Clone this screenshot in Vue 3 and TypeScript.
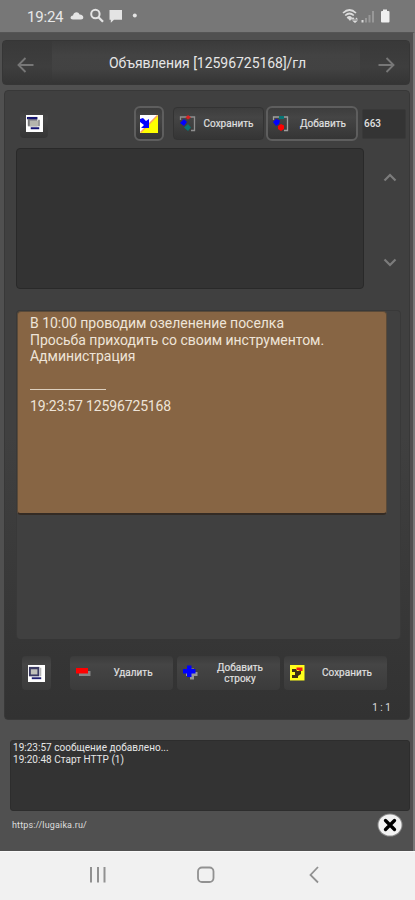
<script setup lang="ts">
import { ref } from 'vue'

const counter = ref('663')
const draft = ref('')
const message: string[] = [
  'В 10:00 проводим озеленение поселка',
  'Просьба приходить со своим инструментом.',
  'Администрация',
]
const log: string[] = ['19:23:57 сообщение добавлено...', '19:20:48 Старт HTTP (1)']
</script>

<template>
  <div class="screen">
    <header class="status">
      <span class="clock">19:24</span>
      <svg class="st-left" width="70" height="18" viewBox="0 0 70 18">
        <path d="M3 12.500C-.5 12.500 0 9 3 8.600C4 4.400 8.500 4.400 9.500 7.600C14 7.500 14.500 12.500 11 12.500Z" fill="#e4e4e4" />
        <circle cx="25.400" cy="7" r="4.200" fill="none" stroke="#e4e4e4" stroke-width="2" />
        <path d="M28.500 10.200L33 14.800" stroke="#e4e4e4" stroke-width="2.200" />
        <path d="M39.500 3H52V12.800H44L40.800 15.800V12.800H39.500Z" fill="#e4e4e4" />
        <circle cx="64.800" cy="8.600" r="2" fill="#e4e4e4" />
      </svg>
      <svg class="st-right" width="50" height="18" viewBox="0 0 50 18">
        <g fill="none" stroke="#dcdcdc" stroke-width="1.700">
          <path d="M1 6Q7.500 0 14 6M3.200 8.500Q7.500 4.500 11.800 8.500M5.200 11Q7.500 9 9.500 11" />
        </g>
        <path d="M5.500 11L8 14L10 11ZM9 12.500L11 10L13 12.500ZM10 13.500H16L13 16ZM13 12.500L14.500 10.500L16 12.500Z" fill="#dcdcdc" />
        <path d="M20.500 15.500V13" stroke="#d8d8d8" stroke-width="2" />
        <path d="M24 15.500V11M27.500 15.500V8M31 15.500V4" stroke="#989898" stroke-width="2" />
        <path d="M41 2.500H45V4H46.500Q47.500 4 47.500 5V14.500Q47.500 15.500 46.500 15.500H40Q39 15.500 39 14.500V5Q39 4 40 4H41Z" fill="#f0f0f0" />
      </svg>
    </header>

    <main class="app">
      <nav class="titlebar">
        <button class="side" aria-label="Назад">
          <svg width="18" height="18" viewBox="0 0 18 18"><path d="M16.500 9H1.500M8.500 2L1.500 9L8.500 16" /></svg>
        </button>
        <h1>Объявления [12596725168]/гл</h1>
        <button class="side right" aria-label="Вперед">
          <svg width="18" height="18" viewBox="0 0 18 18"><path d="M1.500 9H16.500M9.500 2L16.500 9L9.500 16" /></svg>
        </button>
      </nav>

      <section class="panel">
        <div class="toolbar">
          <button class="btn small" aria-label="Окно">
            <svg width="17" height="17" viewBox="0 0 18 18">
              <path d="M0 0H18V18H0Z" fill="#fff" />
              <path d="M2 2H12V12H2Z" fill="#85858a" />
              <path d="M4 6H13V12H4Z" fill="#b5b5ad" />
              <path d="M1 2H12V4.500H1ZM5 13H14V15H5Z" fill="#141470" />
              <path d="M2 4H3.500V11H2ZM13 5H14.500V12H13Z" fill="#777" />
            </svg>
          </button>
          <button class="btn outlined expand" aria-label="Перенести">
            <svg width="18" height="18" viewBox="0 0 18 18">
              <path d="M0 0H18V18H0Z" fill="#fff" />
              <path d="M18 0V18H0Z" fill="#ff0" />
              <path d="M17.500 .5L.5 17.500" stroke="#ffa35e" stroke-width="1.500" />
              <path d="M0 4L3 3L6 6L9 4V13H1L4 10L0 7Z" fill="#00f" />
            </svg>
          </button>
          <button class="btn save-top">
            <svg class="ico" width="18" height="18" viewBox="0 0 18 18">
              <path d="M1.500 5V2H15.500V15.500H12" fill="none" stroke="#8e8e8e" stroke-width="1.300" />
              <path d="M1 8L5 4L8 7L5 11Z" fill="#00f" />
              <path d="M6.500 2.500L9 0L12 2.500L9 4.500Z" fill="#d82020" />
              <path d="M5 12.500L9 9L12 12.500L9 16Z" fill="#087474" />
            </svg>
            <span>Сохранить</span>
          </button>
          <button class="btn outlined add-top">
            <svg class="ico" width="18" height="18" viewBox="0 0 18 18">
              <path d="M1.500 5V2H15.500V15.500H12" fill="none" stroke="#9e9e9e" stroke-width="1.300" />
              <path d="M1 7L4 4L8 5.500L7 9L4 11Z" fill="#00f" />
              <path d="M7 1H12V4H7Z" fill="#087474" />
              <path d="M6 11L9 9L12 10.500V14L9 16L6 14Z" fill="#f00" />
            </svg>
            <span>Добавить</span>
          </button>
          <input v-model="counter" class="count" aria-label="Номер" />
        </div>

        <div class="compose">
          <textarea v-model="draft" aria-label="Сообщение"></textarea>
          <div class="arrows">
            <svg width="14" height="9" viewBox="0 0 14 9"><path d="M1.500 7.500L7 2L12.500 7.500" /></svg>
            <svg width="14" height="9" viewBox="0 0 14 9"><path d="M1.500 1.500L7 7L12.500 1.500" /></svg>
          </div>
        </div>

        <div class="list">
          <article class="card">
            <p v-for="line in message" :key="line">{{ line }}</p>
            <hr />
            <p class="stamp">19:23:57 12596725168</p>
          </article>
        </div>

        <div class="actions">
          <button class="btn square" aria-label="Окно">
            <svg width="17" height="17" viewBox="0 0 18 18">
              <path d="M0 0H18V18H0Z" fill="#fff" />
              <path d="M1 2H12V12H1Z" fill="#3b3b62" />
              <path d="M3 4.500H10V10H3Z" fill="#c1c1ba" />
              <path d="M4 13H14V15H4Z" fill="#202070" />
              <path d="M13 3H14V12H13Z" fill="#999" />
            </svg>
          </button>
          <button class="btn wide">
            <svg class="ico" width="18" height="18" viewBox="0 0 18 18">
              <path d="M4 7H15.500V12H4Z" fill="#858585" /><path d="M1 4H13V9.500H1Z" fill="#f00" />
            </svg>
            <span>Удалить</span>
          </button>
          <button class="btn wide">
            <svg class="ico" width="18" height="18" viewBox="0 0 18 18">
              <path d="M8 4.500H12V8H15.500V12H12V15.500H8V12H4V8H8Z" fill="#969696" />
              <path d="M5 1.500H9.500V5H13.500V9.500H9.500V13H5V9.500H1V5H5Z" fill="#00f" />
            </svg>
            <span>Добавить<br />строку</span>
          </button>
          <button class="btn wide">
            <svg class="ico" width="18" height="18" viewBox="0 0 18 18">
              <path d="M1 1H15.500V16.500H1Z" fill="#ffff1c" />
              <path d="M3 5H7L8 7H12V10L9 12V14H3V11H6V8H3Z" fill="#3d3215" />
              <path d="M7.500 3.500H13.500V7H11L9 6H7.500Z" fill="#ee1b13" />
            </svg>
            <span>Сохранить</span>
          </button>
        </div>
        <div class="ratio">1&thinsp;:&thinsp;1</div>
      </section>

      <section class="log">
        <div v-for="row in log" :key="row">{{ row }}</div>
      </section>

      <footer class="foot">
        <span>https://lugaika.ru/</span>
        <button class="close" aria-label="Закрыть">
          <svg width="26" height="24" viewBox="0 0 26 24">
            <ellipse cx="13" cy="12" rx="12.500" ry="11.500" fill="#8b8b8b" />
            <ellipse cx="13" cy="12" rx="11.500" ry="10.500" fill="#f3f3f3" />
            <path d="M8.500 7.500L17.500 16.500M17.500 7.500L8.500 16.500" stroke="#000" stroke-width="3.300" stroke-linecap="round" />
          </svg>
        </button>
      </footer>
    </main>

    <div class="navkeys">
      <svg width="415" height="48" viewBox="0 0 415 48" fill="none" stroke="#919191">
        <path d="M91 15V30.500M98 15V30.500M104.500 15V30.500" stroke-width="2" />
        <rect x="198" y="15.500" width="15.500" height="14.500" rx="4" stroke-width="1.800" />
        <path d="M318 15L310.500 23L318 30.500" stroke-width="1.800" />
      </svg>
    </div>
  </div>
</template>

<style>
body { margin: 0; background: #505050; }
</style>

<style scoped>
* { box-sizing: border-box; }
.screen {
  width: 415px; height: 900px; overflow: hidden; display: flex; flex-direction: column;
  font-family: Roboto, "Liberation Sans", sans-serif; color: #dedede;
}
button { font: inherit; color: inherit; padding: 0; margin: 0; border: 0; background: none; }
svg { display: block; flex: none; }
.status { height: 32px; background: #777; display: flex; align-items: center; padding: 0 19px 0 27px; }
.clock { font-size: 15px; color: #e8e8e8; width: 43px; letter-spacing: -.2px; line-height: 18px; padding-top: 2px; }
.st-right { margin-left: auto; margin-right: 4px; }
.app {
  height: 819px; background: #505050; border-right: 2px solid #777; border-top: 1px solid #555;
  display: flex; flex-direction: column; padding: 7px 3px 0 2px;
}
.titlebar {
  height: 45px; display: flex; border: 1px solid #363636; border-radius: 4px; overflow: hidden;
  background: linear-gradient(#3b3b3b, #434343 35%, #424242 65%, #343434);
}
.side { width: 49px; background: linear-gradient(#393939, #3e3e3e 60%, #353535); display: flex; align-items: center; justify-content: center; padding: 5px 3px 0 0; }
.side.right { padding: 5px 0 0 3px; }
.side svg { fill: none; stroke: #777; stroke-width: 1.900; }
h1 { flex: 1; margin: 0; padding-left: 3px; text-align: center; font-size: 14px; letter-spacing: -.04px; font-weight: 400; line-height: 44px; color: #e6e6e6; white-space: nowrap; }
.panel {
  margin: 5px 0 0 2px; height: 630px; border: 1px solid #383838; border-radius: 4px;
  background: linear-gradient(#404040, #404040 55%, #323232); padding: 15px 0 0 11px;
}
.toolbar { height: 35px; display: flex; align-items: center; }
.btn { background: linear-gradient(#3d3d3d, #454545 30%, #353535); display: flex; align-items: center; border-radius: 4px; }
.small { width: 28px; height: 28px; margin-left: 4px; justify-content: center; }
.outlined { border: 2px solid #5e5e5e; border-radius: 6px; }
.expand { width: 30px; height: 35px; margin-left: 86px; padding-right: 1px; justify-content: center; }
.save-top { width: 91px; height: 33px; margin-left: 9px; padding-left: 5px; border: 1px solid #333; }
.add-top { width: 92px; height: 35px; margin-left: 2px; padding-left: 4px; }
.btn span { flex: 1; text-align: center; font-size: 10px; line-height: 11.500px; color: #e1e1e1; -webkit-text-stroke: .15px #e1e1e1; }
.save-top span { padding-right: 3px; }
.count {
  width: 44px; height: 30px; margin-left: 4px; padding: 0 1px; border: 1px solid #393939; border-radius: 2px;
  background: #343434; color: #e1e1e1; font: 500 10px Roboto, sans-serif; outline: 0;
}
.compose { display: flex; margin-top: 7px; height: 141px; }
textarea { display: block; width: 348px; height: 141px; resize: none; border: 1px solid #292929; border-radius: 4px; background: #333; color: #ddd; outline: 0; }
.arrows { display: flex; flex-direction: column; justify-content: space-between; padding: 25px 0 22px 19px; }
.arrows svg { fill: none; stroke: #7c7c7c; stroke-width: 2.200; }
.list { margin-top: 21px; width: 385px; height: 329px; border: 1px solid #393939; border-bottom: 0; border-radius: 4px; background: #404040; }
.card { width: 370px; height: 204px; border: 1px solid #5a4a39; border-bottom: 2px solid #342b24; border-radius: 4px; background: #876544; padding: 3px 12px 0 12px; }
.card p { margin: 0; font-size: 14px; line-height: 16.500px; color: #eee4d8; white-space: nowrap; letter-spacing: -.03px; }
.card .stamp { letter-spacing: -.15px; }
.card hr { width: 76px; height: 1px; border: 0; margin: 24px 0 8px; background: #ddd0bf; }
.actions { display: flex; gap: 4px; margin-top: 17px; padding-left: 6px; height: 34px; }
.actions .btn { height: 34px; background: linear-gradient(#3b3b3b, #454545 25%, #3b3b3b); }
.square { width: 29px; justify-content: center; margin-right: 15px; }
.wide { width: 103px; padding-left: 5px; }
.ratio { text-align: right; padding-right: 18px; font-size: 10px; line-height: 12px; margin-top: 12px; letter-spacing: .2px; }
.log { height: 71px; margin: 20px 0 0 8px; border: 1px solid #2d2d2d; border-radius: 3px; background: #333; font-size: 10px; line-height: 11.500px; padding: 1px 2px; letter-spacing: .02px; color: #e6e6e6; }
.foot { height: 28px; display: flex; align-items: center; justify-content: space-between; padding: 0 7px 0 10px; font-size: 9px; letter-spacing: .15px; }
.navkeys { height: 49px; border-top: 1px solid #fafafa; background: #f1f1f1; }
</style>
